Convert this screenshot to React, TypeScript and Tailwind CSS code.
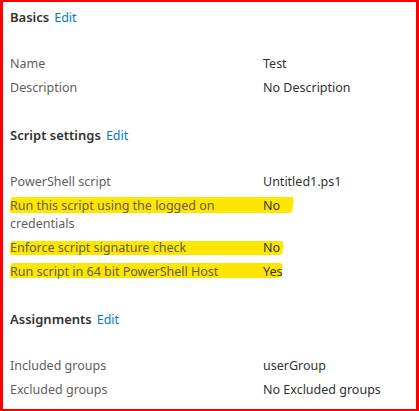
import React from "react";

type Row = { label: string; value: string; mark?: { w: number; top: number; h: number } };

const sections: { title: string; rows: Row[] }[] = [
  {
    title: "Basics",
    rows: [
      { label: "Name", value: "Test" },
      { label: "Description", value: "No Description" },
    ],
  },
  {
    title: "Script settings",
    rows: [
      { label: "PowerShell script", value: "Untitled1.ps1" },
      {
        label: "Run this script using the logged on credentials",
        value: "No",
        mark: { w: 283, top: 0, h: 16 },
      },
      { label: "Enforce script signature check", value: "No", mark: { w: 273, top: 2, h: 14 } },
      { label: "Run script in 64 bit PowerShell Host", value: "Yes", mark: { w: 272, top: 0, h: 15 } },
    ],
  },
  {
    title: "Assignments",
    rows: [
      { label: "Included groups", value: "userGroup" },
      { label: "Excluded groups", value: "No Excluded groups" },
    ],
  },
];

export default function App() {
  return (
    <div className="w-[419px] h-[411px] bg-white border-l-[3px] border-r-[3px] border-t-2 border-b-2 border-[#ff0000] font-['Noto_Sans',sans-serif] text-[12.5px] overflow-hidden">
      <div className="pl-[7px] pt-[5px] flex flex-col gap-[28px]">
        {sections.map((s) => (
          <div key={s.title} className="flex flex-col gap-[28px]">
            <div className="h-[20px] leading-[20px] flex items-baseline gap-[5px]">
              <span className="text-[13px] font-semibold text-[#323130]">{s.title}</span>
              <span className="text-[#0078d4]">Edit</span>
            </div>
            <div className="flex flex-col gap-[6px]">
              {s.rows.map((r) => (
                <div key={r.label} className="relative grid grid-cols-[253px_1fr] leading-[18px]">
                  {r.mark && (
                    <span
                      className="absolute left-0 rounded-[3px] bg-[#ffe600] -skew-x-6"
                      style={{ width: r.mark.w, top: r.mark.top, height: r.mark.h }}
                    />
                  )}
                  <span className="relative pr-[14px] text-[#605e5c]">{r.label}</span>
                  <span className="relative text-[#323130]">{r.value}</span>
                </div>
              ))}
            </div>
          </div>
        ))}
      </div>
    </div>
  );
}
